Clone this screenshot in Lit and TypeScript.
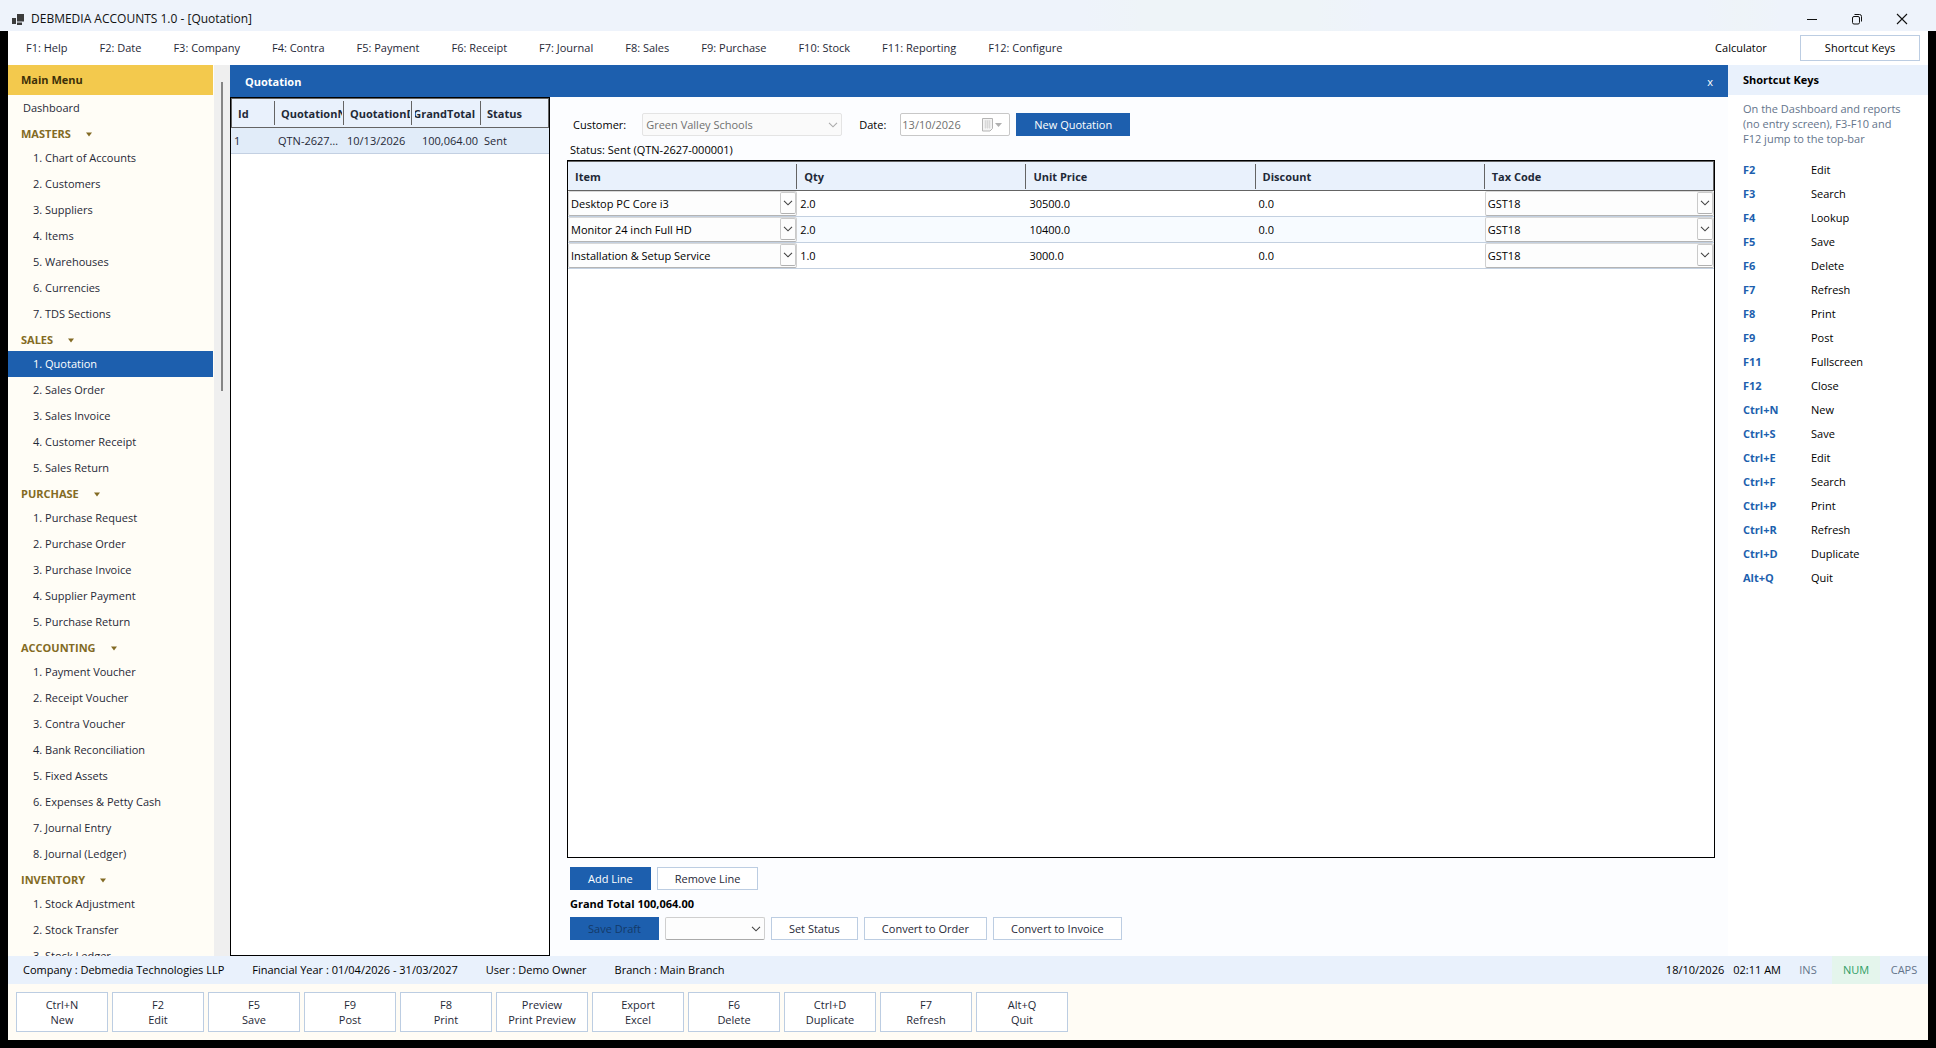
import { LitElement, html, css } from "lit";
import { customElement, state } from "lit/decorators.js";
import { classMap } from "lit/directives/class-map.js";

const MENU = [
  "F1: Help", "F2: Date", "F3: Company", "F4: Contra", "F5: Payment", "F6: Receipt",
  "F7: Journal", "F8: Sales", "F9: Purchase", "F10: Stock", "F11: Reporting", "F12: Configure",
];

const SECTIONS: { title: string; items: string[] }[] = [
  { title: "MASTERS", items: ["Chart of Accounts", "Customers", "Suppliers", "Items", "Warehouses", "Currencies", "TDS Sections"] },
  { title: "SALES", items: ["Quotation", "Sales Order", "Sales Invoice", "Customer Receipt", "Sales Return"] },
  { title: "PURCHASE", items: ["Purchase Request", "Purchase Order", "Purchase Invoice", "Supplier Payment", "Purchase Return"] },
  { title: "ACCOUNTING", items: ["Payment Voucher", "Receipt Voucher", "Contra Voucher", "Bank Reconciliation", "Fixed Assets", "Expenses & Petty Cash", "Journal Entry", "Journal (Ledger)"] },
  { title: "INVENTORY", items: ["Stock Adjustment", "Stock Transfer", "Stock Ledger"] },
];

const LINES = [
  { item: "Desktop PC Core i3", qty: "2.0", price: "30500.0", discount: "0.0", tax: "GST18" },
  { item: "Monitor 24 inch Full HD", qty: "2.0", price: "10400.0", discount: "0.0", tax: "GST18" },
  { item: "Installation & Setup Service", qty: "1.0", price: "3000.0", discount: "0.0", tax: "GST18" },
];

const SHORTCUTS = [
  ["F2", "Edit"], ["F3", "Search"], ["F4", "Lookup"], ["F5", "Save"], ["F6", "Delete"], ["F7", "Refresh"],
  ["F8", "Print"], ["F9", "Post"], ["F11", "Fullscreen"], ["F12", "Close"], ["Ctrl+N", "New"], ["Ctrl+S", "Save"],
  ["Ctrl+E", "Edit"], ["Ctrl+F", "Search"], ["Ctrl+P", "Print"], ["Ctrl+R", "Refresh"], ["Ctrl+D", "Duplicate"], ["Alt+Q", "Quit"],
];

const ACTIONS = [
  ["Ctrl+N", "New"], ["F2", "Edit"], ["F5", "Save"], ["F9", "Post"], ["F8", "Print"], ["Preview", "Print Preview"],
  ["Export", "Excel"], ["F6", "Delete"], ["Ctrl+D", "Duplicate"], ["F7", "Refresh"], ["Alt+Q", "Quit"],
];

const chevron = html`<svg class="chevron" width="10" height="6" viewBox="0 0 10 6" aria-hidden="true">
  <path d="M1 .8 5 4.800 9 .8" fill="none" stroke="currentColor" stroke-width="1.1" />
</svg>`;

const base = css`
  * { box-sizing: border-box; }
  button, select, input {
    font: inherit;
    color: inherit;
    margin: 0;
    padding: 0;
    border: 0;
    border-radius: 0;
    background: none;
    appearance: none;
  }
  button { white-space: nowrap; }
  a { color: inherit; text-decoration: none; }
  table { border-collapse: separate; border-spacing: 0; table-layout: fixed; width: 100%; }
  th, td { padding: 0; font-weight: inherit; text-align: left; }
`;

@customElement("title-bar")
class TitleBar extends LitElement {
  static styles = [base, css`
    :host {
      display: flex;
      align-items: center;
      height: 31px;
      padding: 7px 12px 0 12px;
      background: linear-gradient(90deg, #eef3fb 56%, #eef4f8 59%, #eef4f8 68%, #eef3fb 71%, #eef3fb 88%, #eef4f8 90%, #eef3fb 92%);
      color: #111;
      font-size: 12px;
    }
    .name { flex: 1; margin-left: 7px; line-height: 16px; }
    .control { display: grid; place-items: center; width: 45px; height: 24px; }
  `];

  render() {
    return html`
      <svg width="12" height="11" viewBox="0 0 12 11" aria-hidden="true">
        <path d="M5 0h7v7.500H5zM0 4h4v6H0zM5 8.500h5V11H5z" fill="#3c3c3c" />
      </svg>
      <span class="name">DEBMEDIA ACCOUNTS 1.0 - [Quotation]</span>
      <button class="control" aria-label="Minimize">
        <svg width="12" height="12" viewBox="0 0 12 12"><path d="M1 6.500h10" stroke="#111" /></svg>
      </button>
      <button class="control" aria-label="Restore">
        <svg width="12" height="12" viewBox="0 0 12 12" fill="none" stroke="#111">
          <rect x="1.500" y="3.500" width="7" height="7.500" rx="1.500" />
          <path d="M3.500 1.500h5a2 2 0 0 1 2 2v5" />
        </svg>
      </button>
      <button class="control" aria-label="Close">
        <svg width="12" height="12" viewBox="0 0 12 12"><path d="M1 1l10 10M11 1 1 11" stroke="#111" stroke-width="1.1" /></svg>
      </button>
    `;
  }
}

@customElement("menu-bar")
class MenuBar extends LitElement {
  static styles = [base, css`
    :host {
      display: flex;
      align-items: center;
      height: 34px;
      padding: 0 8px 0 2px;
      background: #fff;
      color: #1f2937;
    }
    .menu { display: flex; flex: 1; }
    .item { padding: 0 16px; line-height: 26px; }
    .tool { width: 118px; height: 26px; color: #000; }
    .outlined { width: 120px; border: 1px solid #bccde2; }
  `];

  render() {
    return html`
      <nav class="menu">${MENU.map((label) => html`<button class="item">${label}</button>`)}</nav>
      <button class="tool">Calculator</button>
      <button class="tool outlined">Shortcut Keys</button>
    `;
  }
}

@customElement("side-menu")
class SideMenu extends LitElement {
  static styles = [base, css`
    :host { display: flex; width: 222px; background: #efefef; color: #1f2937; }
    .pane { display: flex; flex-direction: column; width: 206px; overflow: hidden; background: #fffdf6; }
    .title {
      flex: none;
      height: 30px;
      margin: 0 1px 0 0;
      padding-left: 13px;
      background: #f3c94d;
      color: #3d3008;
      font-size: 11px;
      font-weight: 700;
      line-height: 30px;
    }
    .list { flex: 1; min-height: 0; overflow: hidden; }
    .link { display: block; height: 26px; margin-right: 1px; padding-left: 25px; line-height: 26px; }
    .top { padding-left: 15px; }
    .selected { background: #1d5fae; color: #fff; }
    .heading {
      display: flex;
      align-items: center;
      gap: 15px;
      width: 100%;
      height: 24px;
      padding: 2px 0 0 13px;
      color: #836b24;
      font-weight: 700;
    }
    .track { flex: 1; display: flex; justify-content: center; padding: 17px 0; }
    .thumb { width: 2px; height: 36%; background: #858585; }
  `];

  @state() private active = "Quotation";

  render() {
    return html`
      <div class="pane">
        <h2 class="title">Main Menu</h2>
        <nav class="list">
          <a class="link top" href="#dashboard">Dashboard</a>
          ${SECTIONS.map((section) => html`
            <button class="heading">
              ${section.title}
              <svg width="6" height="5" viewBox="0 0 6 5" aria-hidden="true"><path d="M0 .5h6L3 4.500z" fill="currentColor" /></svg>
            </button>
            ${section.items.map((item, i) => html`
              <a
                class=${classMap({ link: true, selected: item === this.active })}
                href="#${item.toLowerCase().replace(/[^a-z]+/g, "-")}"
                @click=${() => (this.active = item)}
              >${i + 1}. ${item}</a>
            `)}
          `)}
        </nav>
      </div>
      <div class="track"><div class="thumb"></div></div>
    `;
  }
}

@customElement("quotation-list")
class QuotationList extends LitElement {
  static styles = [base, css`
    :host { display: block; width: 320px; border: 1px solid #000; background: #fff; color: #1f2937; }
    .head th {
      height: 30px;
      padding: 2px 2px 0 6px;
      border-top: 1px solid #646464;
      border-bottom: 1px solid #646464;
      background: linear-gradient(#646464, #646464) right center / 1px 24px no-repeat #e9f1fc;
      font-weight: 700;
      overflow: hidden;
      white-space: nowrap;
    }
    .head th:first-child { border-left: 1px solid #646464; }
    .head th:last-child { border-right: 1px solid #646464; background: #e9f1fc; }
    .clip { display: block; overflow: hidden; }
    .head .amount { padding-left: 3px; padding-right: 6px; }
    .amount .clip { display: flex; justify-content: flex-end; }
    .row td {
      height: 26px;
      padding: 0 3px;
      border-bottom: 1px solid #c3d0e2;
      background: #e1ecf9;
      overflow: hidden;
      text-overflow: ellipsis;
      white-space: nowrap;
    }
    .row .amount { text-align: right; }
    .id { width: 44px; }
    .mid { width: 69px; }
    .total { width: 68px; }
  `];

  render() {
    return html`
      <table>
        <colgroup><col class="id" /><col class="mid" /><col class="total" /><col class="mid" /><col /></colgroup>
        <thead>
          <tr class="head">
            <th>Id</th>
            <th><span class="clip">QuotationNo</span></th>
            <th><span class="clip">QuotationDate</span></th>
            <th class="amount"><span class="clip">GrandTotal</span></th>
            <th>Status</th>
          </tr>
        </thead>
        <tbody>
          <tr class="row">
            <td>1</td>
            <td>QTN-2627-000001</td>
            <td>10/13/2026</td>
            <td class="amount">100,064.00</td>
            <td>Sent</td>
          </tr>
        </tbody>
      </table>
    `;
  }
}

@customElement("quotation-form")
class QuotationForm extends LitElement {
  static styles = [base, css`
    :host {
      display: flex;
      flex-direction: column;
      flex: 1;
      min-width: 0;
      padding: 16px 13px 16px 17px;
      background: #fcfdff;
      color: #000;
    }
    .bar { display: flex; flex-wrap: wrap; align-items: center; gap: 6px; padding-left: 3px; }
    .fields { padding-left: 6px; }
    .fields .label { margin-right: 10px; }
    .fields .date-label { margin-left: 11px; margin-right: 8px; }
    .combo { display: grid; align-items: center; height: 23px; }
    .combo > * { grid-area: 1 / 1; }
    .combo .select {
      width: 100%;
      height: 100%;
      padding-left: 3px;
      border: 1px solid #cfcfcf;
      border-radius: 2px;
      background: #fdfdfd;
    }
    .chevron { justify-self: end; margin-right: 4px; color: #444; pointer-events: none; }
    .customer { width: 200px; }
    .customer .select { border-color: #e4e4e4; background: #fafafa; color: #707070; opacity: 1; }
    .customer .chevron { color: #aaa; }
    .status-choice { width: 100px; }
    .status-choice .select { border-bottom-color: #aaa; }
    .date { display: flex; align-items: center; width: 110px; height: 23px; padding-right: 6px; border: 1px solid #c8c8c8; border-radius: 2px; background: #fff; }
    .date-input { flex: 1; min-width: 0; padding-left: 1px; color: #707070; }
    .button { height: 23px; padding: 1px 17px 0; border: 1px solid #bccde2; background: #fff; color: #1f2937; }
    .primary { border-color: #1d5fae; background: #1d5fae; color: #fff; }
    .primary:disabled { color: #143a69; }
    .status { padding: 6px 3px 2px; line-height: 16px; }
    .grid { flex: 1; min-height: 0; border: 1px solid #000; background: #fff; overflow: hidden; }
    .head th {
      height: 30px;
      padding: 2px 0 0 7px;
      border-top: 1px solid #646464;
      border-bottom: 1px solid #646464;
      background: linear-gradient(#646464, #646464) right center / 1px 25px no-repeat #e9f1fc;
      color: #1f2937;
      font-weight: 700;
    }
    .head th:last-child { border-right: 1px solid #646464; background: #e9f1fc; }
    .line td { height: 26px; padding-left: 3px; border-bottom: 1px solid #c3d0e0; }
    .line:nth-child(even) td { background: #f7fbff; }
    .line .cell-combo { padding: 0; }
    .cell-combo .combo { height: 25px; }
    .cell-combo .select {
      padding-left: 2px;
      border-color: #d8d8d8 #d0d0d0 #b4b4b4;
    }
    .cell-combo .drop {
      justify-self: end;
      display: grid;
      place-items: center;
      width: 16px;
      height: 22px;
      margin: 0 1px 2px 0;
      border: 1px solid #cacaca;
      border-bottom-color: #b0b0b0;
      border-radius: 2px;
      background: #fdfdfd;
      pointer-events: none;
    }
    .cell-combo .chevron { justify-self: center; margin: 0; }
    .actions { padding-top: 9px; }
    .total { padding-left: 3px; font-weight: 700; line-height: 27px; }
  `];

  private combo(value: string, label: string) {
    return html`
      <div class="combo">
        <select class="select" aria-label=${label}><option>${value}</option></select>
        <span class="drop">${chevron}</span>
      </div>
    `;
  }

  render() {
    return html`
      <div class="bar fields">
        <label class="label" for="customer">Customer:</label>
        <div class="combo customer">
          <select class="select" id="customer" disabled><option>Green Valley Schools</option></select>
          ${chevron}
        </div>
        <label class="date-label" for="date">Date:</label>
        <div class="date">
          <input class="date-input" id="date" value="13/10/2026" disabled />
          <svg width="21" height="14" viewBox="0 0 21 14" aria-hidden="true">
            <path d="M.5.5h10v10l-2.500 2.500H.5z" fill="#f4f4f4" stroke="#b4b4b4" />
            <path d="M2.500 3h6M2.500 5h6M2.500 7h6M2.500 9h6M3.500 2.500v8M5.500 2.500v8M7.500 2.500v8" stroke="#d4d4d4" stroke-width=".8" />
            <path d="M13 5h7l-3.500 4z" fill="#b0b0b0" />
          </svg>
        </div>
        <button class="button primary">New Quotation</button>
      </div>
      <div class="status">Status: Sent (QTN-2627-000001)</div>
      <div class="grid">
        <table>
          <thead>
            <tr class="head"><th>Item</th><th>Qty</th><th>Unit Price</th><th>Discount</th><th>Tax Code</th></tr>
          </thead>
          <tbody>
            ${LINES.map((line) => html`
              <tr class="line">
                <td class="cell-combo">${this.combo(line.item, "Item")}</td>
                <td>${line.qty}</td>
                <td>${line.price}</td>
                <td>${line.discount}</td>
                <td class="cell-combo">${this.combo(line.tax, "Tax Code")}</td>
              </tr>
            `)}
          </tbody>
        </table>
      </div>
      <div class="bar actions">
        <button class="button primary">Add Line</button>
        <button class="button">Remove Line</button>
      </div>
      <div class="total">Grand Total 100,064.00</div>
      <div class="bar">
        <button class="button primary" disabled>Save Draft</button>
        <div class="combo status-choice">
          <select class="select" aria-label="Status"><option></option></select>
          ${chevron}
        </div>
        <button class="button">Set Status</button>
        <button class="button">Convert to Order</button>
        <button class="button">Convert to Invoice</button>
      </div>
    `;
  }
}

@customElement("shortcut-panel")
class ShortcutPanel extends LitElement {
  static styles = [base, css`
    :host { display: block; width: 200px; background: #fff; color: #000; }
    .title { height: 30px; margin: 0; padding-left: 15px; background: #e9f1fc; font-size: 11px; font-weight: 700; line-height: 30px; }
    .note { margin: 0; padding: 6px 24px 12px 15px; color: #64748b; line-height: 15px; }
    .row { display: grid; grid-template-columns: 68px 1fr; padding-left: 15px; line-height: 24px; }
    .list, .row > * { margin: 0; }
    .key { color: #1d5fae; font-weight: 700; }
  `];

  render() {
    return html`
      <h2 class="title">Shortcut Keys</h2>
      <p class="note">On the Dashboard and reports (no entry screen), F3-F10 and F12 jump to the top-bar</p>
      <dl class="list">
        ${SHORTCUTS.map(([key, name]) => html`<div class="row"><dt class="key">${key}</dt><dd>${name}</dd></div>`)}
      </dl>
    `;
  }
}

@customElement("app-root")
class AppRoot extends LitElement {
  static styles = [base, css`
    :host {
      display: flex;
      flex-direction: column;
      height: 100vh;
      background: #000;
      font: 11px/16px "Open Sans", "Noto Sans", sans-serif;
    }
    .window { display: flex; flex-direction: column; flex: 1; min-height: 0; margin: 0 8px 8px; background: #fff; }
    .body { display: flex; flex: 1; min-height: 0; }
    .document { display: flex; flex-direction: column; flex: 1; min-width: 0; }
    .caption {
      display: flex;
      align-items: center;
      justify-content: space-between;
      height: 32px;
      padding: 2px 15px 0;
      background: #1d5fae;
      color: #fff;
    }
    .caption-title { margin: 0; font-size: 11px; font-weight: 700; }
    .content { display: flex; flex: 1; min-height: 0; }
    .status { display: flex; align-items: center; height: 28px; padding-left: 15px; background: #e9f1fc; color: #000; line-height: 28px; }
    .facts { display: flex; flex: 1; gap: 28px; }
    .clock { margin-right: 9px; }
    .clock.time { margin-right: 3px; }
    .lock { width: 48px; color: #64748b; text-align: center; }
    .on { background: #e4f5ec; color: #2f9e64; }
    .footer { display: flex; gap: 4px; padding: 8px; background: #fffcf5; }
    .action { width: 92px; height: 40px; border: 1px solid #bccde2; background: #fff; color: #1f2937; line-height: 15px; }
    .line { display: block; }
  `];

  render() {
    return html`
      <title-bar></title-bar>
      <div class="window">
        <menu-bar></menu-bar>
        <div class="body">
          <side-menu></side-menu>
          <main class="document">
            <header class="caption">
              <h1 class="caption-title">Quotation</h1>
              <button aria-label="Close quotation">x</button>
            </header>
            <div class="content">
              <quotation-list></quotation-list>
              <quotation-form></quotation-form>
            </div>
          </main>
          <shortcut-panel></shortcut-panel>
        </div>
        <div class="status">
          <div class="facts">
            <span>Company : Debmedia Technologies LLP</span>
            <span>Financial Year : 01/04/2026 - 31/03/2027</span>
            <span>User : Demo Owner</span>
            <span>Branch : Main Branch</span>
          </div>
          <span class="clock">18/10/2026</span>
          <span class="clock time">02:11 AM</span>
          <span class="lock">INS</span>
          <span class="lock on">NUM</span>
          <span class="lock">CAPS</span>
        </div>
        <footer class="footer">
          ${ACTIONS.map(([key, name]) => html`
            <button class="action"><span class="line">${key}</span><span class="line">${name}</span></button>
          `)}
        </footer>
      </div>
    `;
  }
}
